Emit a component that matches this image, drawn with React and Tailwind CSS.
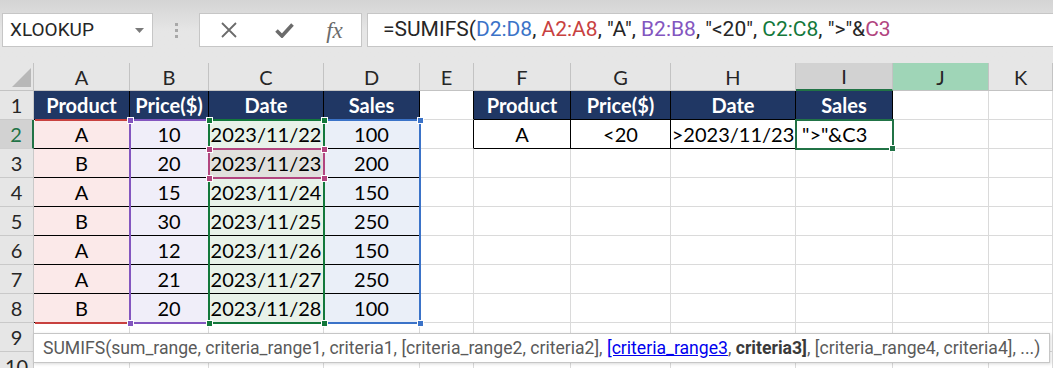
import React from 'react';

const letters = ['A', 'B', 'C', 'D', 'E', 'F', 'G', 'H', 'I', 'J', 'K'];

const data = [
  ['A', '10', '2023/11/22', '100'],
  ['B', '20', '2023/11/23', '200'],
  ['A', '15', '2023/11/24', '150'],
  ['B', '30', '2023/11/25', '250'],
  ['A', '12', '2023/11/26', '150'],
  ['A', '21', '2023/11/27', '250'],
  ['B', '20', '2023/11/28', '100'],
];

const heads = ['Product', 'Price($)', 'Date', 'Sales'];
const criteria = ['A', '<20', '>2023/11/23', '">"&C3'];

const fills = ['bg-[#fbe9e9]', 'bg-[#f0eef9]', 'bg-[#e8f2e9]', 'bg-[#eaeff8]'];

const cellBase = 'flex items-center justify-center whitespace-nowrap overflow-visible text-[20px] text-black';
const grid = 'border-r border-b border-[#dadada]';
const boxed = 'border-r border-b border-black';

function ColumnHeader({ letter }) {
  if (letter === 'I') {
    return (
      <div className="flex items-center justify-center bg-[#d2d2d2] border-r border-[#c3c3c3] border-b-2 border-b-[#217346] text-[20px] text-[#262626]">
        {letter}
      </div>
    );
  }
  if (letter === 'J') {
    return (
      <div className="flex items-center justify-center bg-[#9fd5b7] border-r border-b border-[#c3c3c3] text-[20px] text-[#262626]">
        {letter}
      </div>
    );
  }
  return (
    <div className="flex items-center justify-center bg-[#e6e6e6] border-r border-b border-[#c3c3c3] text-[20px] text-[#262626]">
      {letter}
    </div>
  );
}

function RowHeader({ n }) {
  if (n === 2) {
    return (
      <div className="flex items-center justify-center bg-[#d2d2d2] border-b border-[#cfcfcf] border-r-2 border-r-[#217346] text-[20px] text-[#217346]">
        {n}
      </div>
    );
  }
  return (
    <div className="flex items-center justify-center bg-[#e6e6e6] border-r border-b border-[#c9c9c9] text-[20px] text-[#262626]">
      {n}
    </div>
  );
}

function Square({ className }) {
  return <div className={`absolute w-[7px] h-[7px] border border-white ${className}`}></div>;
}

function Sheet() {
  const cells = [];

  // column header row
  cells.push(
    <div key="corner" className="relative bg-[#e6e6e6] border-r border-b border-[#c3c3c3]">
      <svg className="absolute left-0 top-0" width="34" height="28" viewBox="0 0 34 28">
        <polygon points="31,5 31,24 12,24" fill="#b8b8b8" />
      </svg>
    </div>
  );
  letters.forEach((l) => cells.push(<ColumnHeader key={'h' + l} letter={l} />));

  for (let r = 1; r <= 10; r++) {
    cells.push(<RowHeader key={'r' + r} n={r} />);
    for (let c = 0; c < 11; c++) {
      const key = r + '-' + c;
      if (r === 1 && (c < 4 || (c >= 5 && c < 9))) {
        const text = heads[c < 4 ? c : c - 5];
        cells.push(
          <div key={key} className={`${cellBase} ${boxed} bg-[#203764] font-bold text-white`}>
            <span className="text-white">{text}</span>
          </div>
        );
      } else if (r >= 2 && r <= 8 && c < 4) {
        const fill = r === 3 && c === 2 ? 'bg-[#e1e0dd]' : fills[c];
        cells.push(
          <div key={key} className={`${cellBase} ${boxed} ${fill}`}>
            {data[r - 2][c]}
          </div>
        );
      } else if (r === 2 && c >= 5 && c < 9) {
        const text = criteria[c - 5];
        cells.push(
          <div
            key={key}
            className={`${c === 8 ? 'flex items-center justify-start pl-[6px] whitespace-nowrap text-[20px] text-black' : cellBase} ${boxed} bg-white`}
          >
            {text}
          </div>
        );
      } else if ((r === 1 || r === 2) && c === 4) {
        cells.push(<div key={key} className="border-b border-[#dadada] border-r border-r-black bg-white"></div>);
      } else {
        cells.push(<div key={key} className={`${grid} bg-white`}></div>);
      }
    }
  }

  return (
    <div className="relative h-[305px] overflow-hidden font-['Lato',sans-serif]">
      <div className="grid grid-cols-[34px_96px_79px_115px_96px_54px_97px_100px_125px_97px_96px_64px] grid-rows-[28px_repeat(10,29px)]">
        {cells}
      </div>

      {/* formula range highlights */}
      <div className="absolute left-[35px] top-[56px] w-[96px] h-[205px] border-y-2 border-[#c8413f]"></div>
      <div className="absolute left-[323px] top-[56px] w-[98px] h-[205px] border-2 border-[#3b73c8]"></div>
      <div className="absolute left-[129px] top-[56px] w-[81px] h-[205px] border-2 border-[#8356bf]"></div>
      <div className="absolute left-[208px] top-[56px] w-[117px] h-[205px] border-2 border-[#13783b]"></div>
      <div className="absolute left-[208px] top-[85px] w-[117px] h-[31px] border-2 border-[#b2457f]"></div>

      <Square className="left-[127px] top-[54px] bg-[#8356bf]" />
      <Square className="left-[127px] top-[257px] bg-[#8356bf]" />
      <Square className="left-[417px] top-[54px] bg-[#3b73c8]" />
      <Square className="left-[417px] top-[257px] bg-[#3b73c8]" />
      <Square className="left-[206px] top-[54px] bg-[#13783b]" />
      <Square className="left-[321px] top-[54px] bg-[#13783b]" />
      <Square className="left-[206px] top-[257px] bg-[#13783b]" />
      <Square className="left-[321px] top-[257px] bg-[#13783b]" />
      <Square className="left-[206px] top-[83px] bg-[#b2457f]" />
      <Square className="left-[321px] top-[83px] bg-[#b2457f]" />
      <Square className="left-[206px] top-[112px] bg-[#b2457f]" />
      <Square className="left-[321px] top-[112px] bg-[#b2457f]" />

      {/* active cell */}
      <div className="absolute left-[795px] top-[56px] w-[99px] h-[31px] border-2 border-[#217346]"></div>
      <div className="absolute left-[889px] top-[82px] w-[7px] h-[7px] bg-[#217346] border border-white"></div>

      {/* function tooltip */}
      <div className="absolute left-[33px] top-[270px] w-[1017px] h-[30px] flex items-center pl-[9px] bg-white border border-[#c6c6c6] shadow-[1px_1px_3px_rgba(0,0,0,0.15)] font-['Roboto',sans-serif] text-[17.6px] text-[#5a5a5a] whitespace-nowrap">
        <span>
          SUMIFS(sum_range, criteria_range1, criteria1, [criteria_range2, criteria2],{' '}
          <span className="text-[#0000ee] underline">[criteria_range3</span>,{' '}
          <span className="font-bold text-[#3a3a3a]">criteria3]</span>, [criteria_range4, criteria4], ...)
        </span>
      </div>
    </div>
  );
}

function FormulaBar() {
  return (
    <div className="h-[63px] bg-gradient-to-b from-[#d4d4d4] via-[#e6e6e6] to-[#e6e6e6] pt-[13px] font-['Roboto',sans-serif]">
      <div className="flex h-[34px] items-stretch">
        <div className="ml-[2px] w-[151px] flex items-center justify-between bg-white border border-[#c6c6c6] pl-[7px] pr-[8px]">
          <span className="text-[19px] text-[#262626]">XLOOKUP</span>
          <svg width="9" height="5" viewBox="0 0 9 5">
            <polygon points="0,0 9,0 4.5,5" fill="#7a7a7a" />
          </svg>
        </div>
        <div className="w-[46px] flex flex-col items-center justify-center gap-[3px]">
          <span className="block w-[3px] h-[3px] bg-[#a8a8a8]"></span>
          <span className="block w-[3px] h-[3px] bg-[#a8a8a8]"></span>
          <span className="block w-[3px] h-[3px] bg-[#a8a8a8]"></span>
        </div>
        <div className="w-[163px] flex items-center bg-white border border-[#c6c6c6]">
          <div className="w-[56px] flex justify-center pl-[2px]">
            <svg width="18" height="16" viewBox="0 0 18 16">
              <path d="M2 1 L16 15 M16 1 L2 15" stroke="#6b6b6b" strokeWidth="1.8" fill="none" />
            </svg>
          </div>
          <div className="w-[56px] flex justify-center">
            <svg width="19" height="16" viewBox="0 0 19 16">
              <path d="M1.5 8.5 L7 14 L17.5 2.5" stroke="#6b6b6b" strokeWidth="3.6" fill="none" strokeLinejoin="miter" />
            </svg>
          </div>
          <div className="flex-1 flex justify-center pr-[4px]">
            <span className="font-['Liberation_Serif',serif] italic text-[23px] text-[#6b6b6b] leading-none">fx</span>
          </div>
        </div>
        <div className="ml-[5px] flex-1 flex items-center bg-white border-y border-l border-[#c6c6c6] pl-[15px] text-[21px] text-[#262626] whitespace-nowrap">
          <span>
            =SUMIFS(<span className="text-[#3b73c8]">D2:D8</span>, <span className="text-[#c8413f]">A2:A8</span>, "A",{' '}
            <span className="text-[#8356bf]">B2:B8</span>, "&lt;20", <span className="text-[#13783b]">C2:C8</span>, "&gt;"&amp;
            <span className="text-[#b2457f]">C3</span>
          </span>
        </div>
      </div>
    </div>
  );
}

export default function App() {
  return (
    <div className="w-[1053px] h-[368px] overflow-hidden bg-white">
      <FormulaBar />
      <Sheet />
    </div>
  );
}
